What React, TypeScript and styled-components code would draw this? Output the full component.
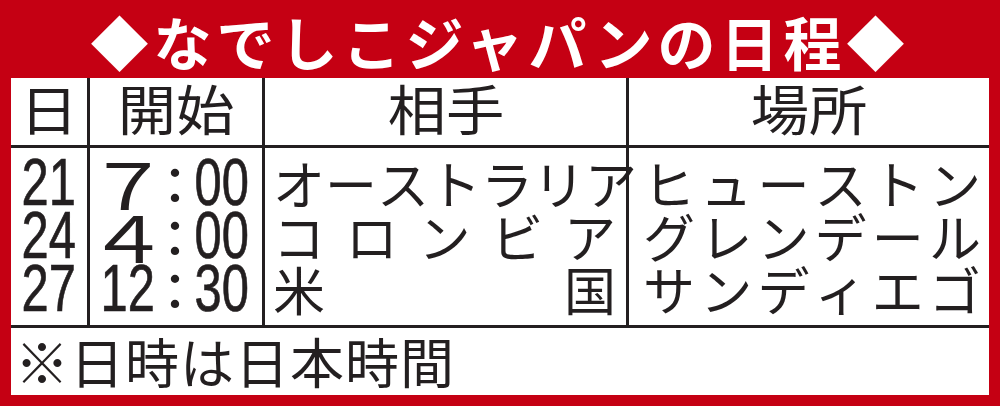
import React from "react";
import styled, { createGlobalStyle } from "styled-components";

const INK = "#231f20";
const RED = "#c50013";
const JP = `"Noto Sans CJK JP", "Noto Sans", sans-serif`;

const Global = createGlobalStyle`
  html, body { margin: 0; padding: 0; background: ${RED}; }
  * { box-sizing: border-box; }
`;

const Page = styled.div`
  width: 1000px;
  height: 406px;
  background: ${RED};
  padding: 0 11px 11px;
  display: flex;
  flex-direction: column;
  font-family: ${JP};
  color: ${INK};
`;

const Title = styled.h1`
  margin: 0;
  height: 78px;
  display: flex;
  align-items: center;
  justify-content: center;
  padding-top: 4px;
  color: #fff;
  font-family: ${JP};
  font-weight: 700;
  font-size: 58px;
  line-height: 1;
  letter-spacing: 5px;
  white-space: nowrap;
`;

const Panel = styled.div`
  flex: 1;
  background: #fff;
  display: grid;
  grid-template-rows: 70px 180px 1fr;
`;

const Row = styled.div`
  display: grid;
  grid-template-columns: 76px 175px 364px 363px;
  border-bottom: 3px solid ${INK};
`;

const Cell = styled.div<{ $pl?: number; $pr?: number }>`
  min-width: 0;
  padding: 0 ${(p) => p.$pr ?? 0}px 0 ${(p) => p.$pl ?? 0}px;
  & + & {
    border-left: 3px solid ${INK};
  }
`;

const HeadCell = styled(Cell)`
  display: flex;
  align-items: center;
  justify-content: center;
  font-size: 54px;
  line-height: 1;
  padding-bottom: 8px;
`;

const HeadText = styled.span`
  display: inline-block;
  transform: scaleX(1.08);
`;

const Lines = styled(Cell)`
  display: flex;
  flex-direction: column;
  padding-top: 8px;
`;

const Line = styled.div`
  height: 53px;
  display: flex;
  align-items: center;
  justify-content: center;
`;

const Num = styled.span<{ $sx: number }>`
  display: inline-block;
  font-family: "Liberation Sans", Arial, sans-serif;
  font-size: 66px;
  line-height: 53px;
  -webkit-text-stroke: 0.7px ${INK};
  transform: scaleX(${(p) => p.$sx});
  transform-origin: center;
`;

const WideNum = styled.span`
  display: inline-block;
  font-family: ${JP};
  font-size: 64px;
  line-height: 53px;
  transform: scaleX(1.3);
`;

const TimeLine = styled.div`
  height: 53px;
  display: grid;
  grid-template-columns: 64px 30px 64px;
  padding-left: 6px;
  align-items: center;
`;

const Slot = styled.div`
  display: flex;
  justify-content: center;
  align-items: center;
  height: 53px;
`;

const Colon = styled.span`
  font-family: ${JP};
  font-size: 50px;
  line-height: 53px;
  font-weight: 500;
`;

const SpreadLine = styled.div`
  height: 53px;
  display: flex;
  justify-content: space-between;
  align-items: center;
  font-size: 52px;
  line-height: 53px;
`;

const Footer = styled.div`
  display: flex;
  align-items: center;
  padding: 0 0 2px 4px;
  font-size: 54px;
  line-height: 1;
  letter-spacing: 1px;
`;

const Spread = ({ text }: { text: string }) => (
  <SpreadLine>
    {Array.from(text).map((c, i) => (
      <span key={i}>{c}</span>
    ))}
  </SpreadLine>
);

const rows = [
  { day: "21", h: "７", m: "00", wide: true, team: "オーストラリア", place: "ヒューストン" },
  { day: "24", h: "４", m: "00", wide: true, team: "コロンビア", place: "グレンデール" },
  { day: "27", h: "12", m: "30", wide: false, team: "米国", place: "サンディエゴ" },
];

export default function App() {
  return (
    <>
      <Global />
      <Page>
        <Title>◆なでしこジャパンの日程◆</Title>
        <Panel>
          <Row>
            <HeadCell><HeadText>日</HeadText></HeadCell>
            <HeadCell><HeadText>開始</HeadText></HeadCell>
            <HeadCell><HeadText>相手</HeadText></HeadCell>
            <HeadCell><HeadText>場所</HeadText></HeadCell>
          </Row>
          <Row>
            <Lines>
              {rows.map((r) => (
                <Line key={r.day}>
                  <Num $sx={0.74}>{r.day}</Num>
                </Line>
              ))}
            </Lines>
            <Lines>
              {rows.map((r) => (
                <TimeLine key={r.day}>
                  <Slot>
                    {r.wide ? <WideNum>{r.h}</WideNum> : <Num $sx={0.74}>{r.h}</Num>}
                  </Slot>
                  <Slot>
                    <Colon>：</Colon>
                  </Slot>
                  <Slot>
                    <Num $sx={0.74}>{r.m}</Num>
                  </Slot>
                </TimeLine>
              ))}
            </Lines>
            <Lines $pl={8} $pr={10}>
              {rows.map((r) => (
                <Spread key={r.team} text={r.team} />
              ))}
            </Lines>
            <Lines $pl={14} $pr={8}>
              {rows.map((r) => (
                <Spread key={r.place} text={r.place} />
              ))}
            </Lines>
          </Row>
          <Footer>※日時は日本時間</Footer>
        </Panel>
      </Page>
    </>
  );
}
